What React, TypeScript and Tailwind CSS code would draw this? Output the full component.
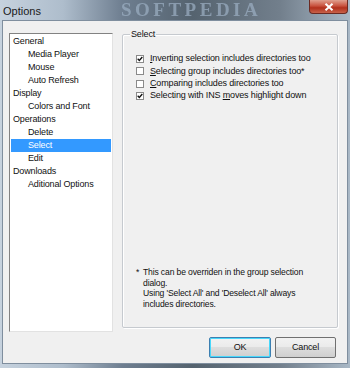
import React from 'react';

const treeItems = [
  { label: 'General', level: 0 },
  { label: 'Media Player', level: 1 },
  { label: 'Mouse', level: 1 },
  { label: 'Auto Refresh', level: 1 },
  { label: 'Display', level: 0 },
  { label: 'Colors and Font', level: 1 },
  { label: 'Operations', level: 0 },
  { label: 'Delete', level: 1 },
  { label: 'Select', level: 1, selected: true },
  { label: 'Edit', level: 1 },
  { label: 'Downloads', level: 0 },
  { label: 'Aditional Options', level: 1 },
];

function CheckBox({ checked }: { checked: boolean }) {
  return (
    <span className="w-[8px] h-[8px] border border-[#8a8a8a] bg-white flex items-center justify-center shrink-0">
      {checked && (
        <svg width="6" height="6" viewBox="0 0 7 7">
          <path d="M0.8 3.2 L2.7 5.2 L6.2 1.2" fill="none" stroke="#111" strokeWidth="1.6" />
        </svg>
      )}
    </span>
  );
}

function Option({ checked, pre, ul, post }: { checked: boolean; pre: string; ul: string; post: string }) {
  return (
    <div className="h-[12.33px] flex items-center">
      <CheckBox checked={checked} />
      <span className="ml-[6px] whitespace-nowrap">
        {pre}
        <span className="underline underline-offset-1">{ul}</span>
        {post}
      </span>
    </div>
  );
}

export default function App() {
  return (
    <div className="w-[350px] h-[368px] overflow-hidden flex flex-col bg-[linear-gradient(90deg,#c6d2de_0%,#aebdcc_18%,#6e7e90_35%,#55636f_55%,#727f8c_80%,#a9b8c6_100%)] font-['Liberation_Sans',Arial,sans-serif] text-[9px] text-[#111] tracking-[-0.15px]">
      {/* Title bar */}
      <div className="h-[20px] relative shrink-0">
        <span className="absolute left-[3px] top-[3px] text-[11px] text-[#1a1a1a] tracking-normal">Options</span>
        <span className="absolute left-[121px] top-0 font-['Liberation_Serif',serif] font-bold text-[19px] leading-[20px] text-[#9db0c4] opacity-70 blur-[0.6px] tracking-[3.5px]">
          SOFTPEDIA
        </span>
        <div className="absolute right-[2px] top-0 w-[39px] h-[14px] rounded-b-[4px] border border-t-0 border-[#6b2a22] bg-[linear-gradient(180deg,#e0a08f_0%,#c9533f_45%,#b2301c_60%,#c8624a_100%)] flex items-center justify-center">
          <svg width="10" height="8" viewBox="0 0 10 8">
            <path d="M1.5 0.8 L8.5 7.2 M8.5 0.8 L1.5 7.2" stroke="white" strokeWidth="2" />
          </svg>
        </div>
      </div>

      {/* Client area */}
      <div className="mx-[2px] h-[344px] bg-[#f0f0f0] border border-[#7f8e9e] flex flex-col">
        <div className="flex pl-[6px] pt-[12px]">
          {/* Tree */}
          <div className="w-[104px] h-[299px] bg-white border border-t-[#828282] border-l-[#828282] border-r-[#e2e2e2] border-b-[#e2e2e2] pt-[1px] px-[1px]">
            {treeItems.map((item) => (
              <div
                key={item.label}
                className={`h-[13px] flex items-center whitespace-nowrap ${item.selected ? 'bg-[#3399ff] text-white' : ''}`}
              >
                <span className={item.level === 0 ? 'pl-[2px]' : 'pl-[17px]'}>{item.label}</span>
              </div>
            ))}
          </div>

          {/* Group box */}
          <div className="ml-[9px] mt-[1px] w-[216px] h-[294px] relative border border-[#c6cacf] rounded-[2px] shadow-[inset_1px_1px_0_#ffffff,1px_1px_0_#ffffff]">
            <span className="absolute left-[7px] top-[-7px] bg-[#f0f0f0] px-[1px] leading-[12px]">Select</span>
            <div className="pl-[13px] pt-[18px]">
              <Option checked pre="" ul="I" post="nverting selection includes directories too" />
              <Option checked={false} pre="" ul="S" post="electing group includes directories too*" />
              <Option checked={false} pre="" ul="C" post="omparing includes directories too" />
              <Option checked pre="Selecting with INS " ul="m" post="oves highlight down" />
            </div>
            <div className="absolute left-[13px] top-[232px] w-[190px] flex leading-[10.7px] text-[8.6px]">
              <span className="w-[7px] shrink-0">*</span>
              <div>
                <div>This can be overriden in the group selection dialog.</div>
                <div>Using 'Select All' and 'Deselect All' always includes directories.</div>
              </div>
            </div>
          </div>
        </div>

        {/* Buttons */}
        <div className="flex justify-end gap-[4px] pr-[11px] mt-[5px]">
          <button className="w-[62px] h-[21px] rounded-[2px] border border-[#3c7fb1] shadow-[inset_0_0_0_1px_#48d8fb] bg-[linear-gradient(180deg,#f2f2f2_0%,#ebebeb_45%,#dddddd_50%,#cfcfcf_100%)] text-[9px] text-[#111]">
            OK
          </button>
          <button className="w-[61px] h-[21px] rounded-[2px] border border-[#707070] bg-[linear-gradient(180deg,#f2f2f2_0%,#ebebeb_45%,#dddddd_50%,#cfcfcf_100%)] text-[9px] text-[#111]">
            Cancel
          </button>
        </div>
      </div>
    </div>
  );
}
